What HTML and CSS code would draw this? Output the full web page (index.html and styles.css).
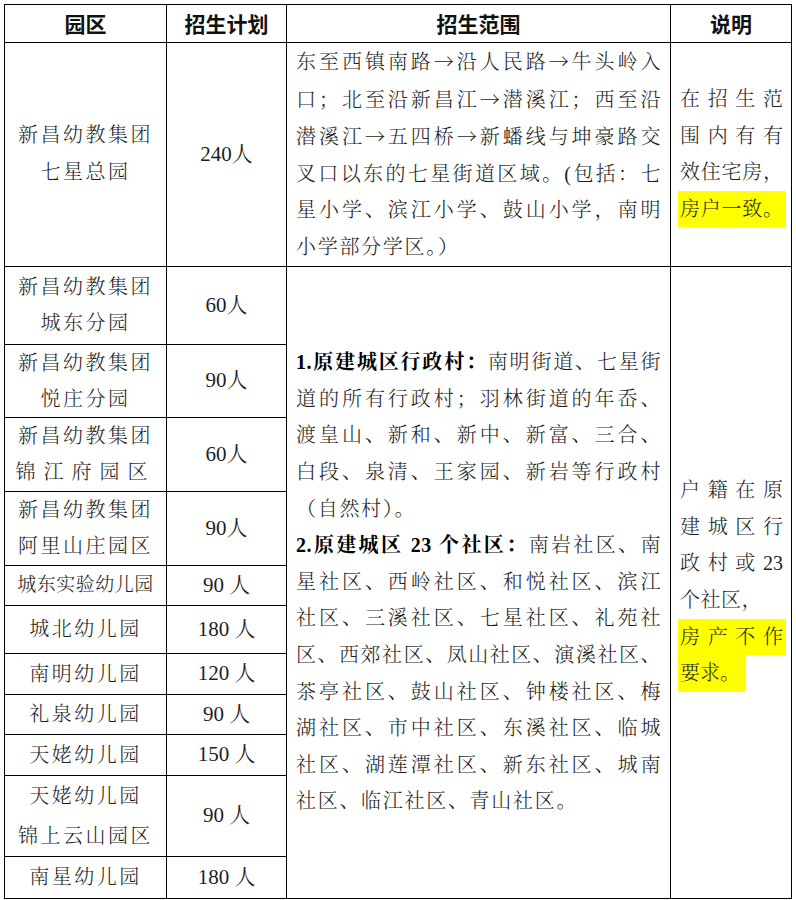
FILE: index.html
```html
<!DOCTYPE html>
<html lang="zh-CN">
<head>
<meta charset="utf-8">
<title>招生范围</title>
<link rel="stylesheet" href="styles.css">
</head>
<body>
<div class="page">
<table class="tbl">
<colgroup><col class="c1"><col class="c2"><col class="c3"><col class="c4"></colgroup>
<thead>
<tr class="hd"><th>园区</th><th>招生计划</th><th>招生范围</th><th>说明</th></tr>
</thead>
<tbody>
<tr class="r1">
<td class="name lh37"><div>新昌幼教集团</div><div>七星总园</div></td>
<td class="num">240人</td>
<td class="scope">
<div class="j">东至西镇南路<span class="ar">→</span>沿人民路<span class="ar">→</span>牛头岭入</div>
<div class="j">口；北至沿新昌江<span class="ar">→</span>潜溪江；西至沿</div>
<div class="j">潜溪江<span class="ar">→</span>五四桥<span class="ar">→</span>新蟠线与坤豪路交</div>
<div class="j">叉口以东的七星街道区域。(包括：七</div>
<div class="j">星小学、滨江小学、鼓山小学，南明</div>
<div class="free">小学部分学区。）</div>
</td>
<td class="note">
<div class="j">在招生范</div>
<div class="j">围内有有</div>
<div class="j">效住宅房，</div>
<div class="j hl">房户一致。</div>
</td>
</tr>
<tr class="r2">
<td class="name"><div>新昌幼教集团</div><div>城东分园</div></td>
<td class="num">60人</td>
<td class="scope" rowspan="11">
<div class="j"><b>1.原建城区行政村：</b>南明街道、七星街</div>
<div class="j">道的所有行政村；羽林街道的年岙、</div>
<div class="j">渡皇山、新和、新中、新富、三合、</div>
<div class="j">白段、泉清、王家园、新岩等行政村</div>
<div class="free">（自然村）。</div>
<div class="j"><b>2.原建城区 23 个社区：</b>南岩社区、南</div>
<div class="j">星社区、西岭社区、和悦社区、滨江</div>
<div class="j">社区、三溪社区、七星社区、礼苑社</div>
<div class="j">区、西郊社区、凤山社区、演溪社区、</div>
<div class="j">茶亭社区、鼓山社区、钟楼社区、梅</div>
<div class="j">湖社区、市中社区、东溪社区、临城</div>
<div class="j">社区、湖莲潭社区、新东社区、城南</div>
<div class="free">社区、临江社区、青山社区。</div>
</td>
<td class="note" rowspan="11">
<div class="j">户籍在原</div>
<div class="j">建城区行</div>
<div class="j">政村或23</div>
<div class="free">个社区，</div>
<div class="j hl">房产不作</div>
<div><span class="hlb">要求。</span></div>
</td>
</tr>
<tr class="r3">
<td class="name"><div>新昌幼教集团</div><div>悦庄分园</div></td>
<td class="num">90人</td>
</tr>
<tr class="r4">
<td class="name"><div>新昌幼教集团</div><div class="wide">锦江府园区</div></td>
<td class="num">60人</td>
</tr>
<tr class="r5">
<td class="name"><div>新昌幼教集团</div><div>阿里山庄园区</div></td>
<td class="num">90人</td>
</tr>
<tr class="r6">
<td class="name small">城东实验幼儿园</td>
<td class="num">90 人</td>
</tr>
<tr class="r7">
<td class="name">城北幼儿园</td>
<td class="num">180 人</td>
</tr>
<tr class="r8">
<td class="name">南明幼儿园</td>
<td class="num">120 人</td>
</tr>
<tr class="r9">
<td class="name">礼泉幼儿园</td>
<td class="num">90 人</td>
</tr>
<tr class="r10">
<td class="name">天姥幼儿园</td>
<td class="num">150 人</td>
</tr>
<tr class="r11">
<td class="name lh40"><div>天姥幼儿园</div><div>锦上云山园区</div></td>
<td class="num">90 人</td>
</tr>
<tr class="r12">
<td class="name">南星幼儿园</td>
<td class="num">180 人</td>
</tr>
</tbody>
</table>
</div>
</body>
</html>
```

FILE: styles.css
```css
html, body {
  margin: 0;
  padding: 0;
  background: #fff;
}

body {
  font-family: "Liberation Serif", "Noto Serif CJK SC", "Noto Sans CJK SC", serif;
  font-weight: 300;
  color: #1e1e1e;
}

.page {
  padding: 4px 0 0 4px;
}

.tbl {
  border-collapse: collapse;
  table-layout: fixed;
  width: 788px;
}

.c1 { width: 162px; }
.c2 { width: 120px; }
.c3 { width: 384px; }
.c4 { width: 121px; }

.tbl th,
.tbl td {
  border: 1px solid #000;
  padding: 0;
  vertical-align: middle;
}

.tbl th {
  font-family: "Noto Sans CJK SC", sans-serif;
  font-weight: 700;
  font-size: 21px;
  line-height: 1;
  text-align: center;
  color: #111;
}

.hd { height: 38px; }
.r1 { height: 220px; }
.r2 { height: 78px; }
.r3 { height: 73px; }
.r4 { height: 74px; }
.r5 { height: 74px; }
.r6 { height: 40px; }
.r7 { height: 48px; }
.r8 { height: 41px; }
.r9 { height: 40px; }
.r10 { height: 41px; }
.r11 { height: 81px; }
.r12 { height: 42px; }

.tbl .name {
  font-size: 20px;
  line-height: 36px;
  letter-spacing: 2.5px;
  text-align: center;
}

.tbl .lh37 { line-height: 37px; }
.tbl .lh40 { line-height: 40px; }

.name .wide { letter-spacing: 8px; }

.tbl .small {
  font-size: 19px;
  letter-spacing: 0.5px;
}

.tbl .num {
  font-size: 21px;
  font-weight: 400;
  text-align: center;
  line-height: 1;
}

.tbl .scope {
  font-size: 20px;
  line-height: 36.6px;
  letter-spacing: 0.5px;
  padding: 0 9px 0 9px;
}

.scope .free {
  letter-spacing: 1.7px;
}

.scope b {
  font-weight: 700;
  color: #000;
}

.ar {
  font-family: "Noto Serif CJK SC", "Noto Sans CJK SC", sans-serif;
}

.tbl .note {
  font-size: 20px;
  line-height: 36.6px;
  letter-spacing: 0;
  padding: 0 8px 0 9px;
}

.note .free {
  letter-spacing: 0.5px;
}

.j {
  text-align: justify;
  text-align-last: justify;
}

.hl {
  background: #ffff00;
  margin: 0 -3px 0 -2px;
  padding: 0 3px 0 2px;
}

.hlb {
  display: inline-block;
  background: #ffff00;
  margin-left: -2px;
  padding: 0 6px 0 2px;
}
```
